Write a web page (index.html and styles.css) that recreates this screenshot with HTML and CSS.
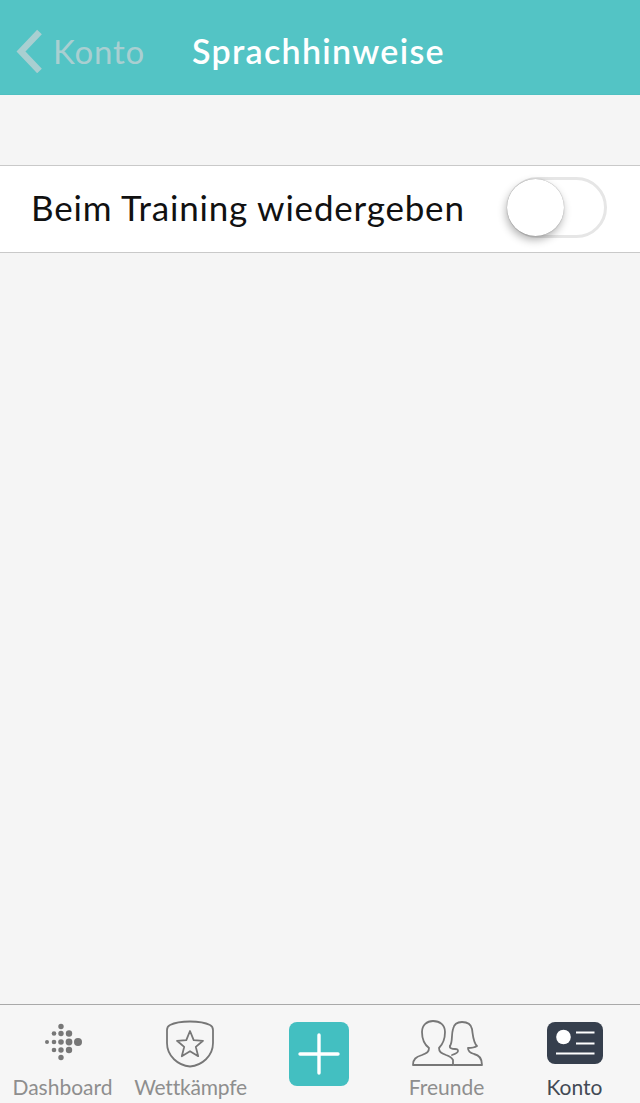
FILE: index.html
```html
<!DOCTYPE html>
<html lang="de">
  <head>
    <meta charset="utf-8">
    <title>Sprachhinweise</title>
    <link rel="stylesheet" href="styles.css">
  </head>
  <body>
    <div class="app">
      <header class="topbar">
        <div class="back">
          <svg class="chevron" width="28" height="44" viewBox="0 0 28 44">
            <path d="M24.500 3 L6 22.500 L24.500 42" fill="none" stroke="#a9cfd1" stroke-width="6.500"/>
          </svg>
          <span>Konto</span>
        </div>
        <h1>Sprachhinweise</h1>
      </header>
      <main class="content">
        <div class="row">
          <span>Beim Training wiedergeben</span>
          <div class="switch"><div class="knob"></div></div>
        </div>
      </main>
      <nav class="tabs">
        <div class="tab">
          <svg class="icon" width="44" height="44" viewBox="0 0 44 44" fill="#777">
            <circle cx="20" cy="5.500" r="2.700"/>
            <circle cx="13" cy="12.500" r="2.300"/><circle cx="20" cy="12.500" r="2.700"/><circle cx="28" cy="12.500" r="3.200"/>
            <circle cx="6" cy="21" r="2"/><circle cx="13" cy="21" r="2.300"/><circle cx="20" cy="21" r="2.800"/><circle cx="28" cy="21" r="3.400"/><circle cx="37" cy="21" r="4"/>
            <circle cx="13" cy="29" r="2.300"/><circle cx="20" cy="29" r="2.700"/><circle cx="28" cy="29" r="3.200"/>
            <circle cx="20" cy="36.500" r="2.700"/>
          </svg>
          <span>Dashboard</span>
        </div>
        <div class="tab">
          <svg class="icon icon-shield" width="50" height="50" viewBox="0 0 50 50" fill="none" stroke="#777" stroke-width="1.800" stroke-linejoin="round">
            <path d="M25 2.500 C33 2.500 40 3.500 45 6 C47.500 7.200 48 9 48 11 V24 C48 37 37 46.500 25 47.500 C13 46.500 2 37 2 24 V11 C2 9 2.500 7.200 5 6 C10 3.500 17 2.500 25 2.500 Z"/>
            <path d="M25 12 L28.700 21.200 L38 21.800 L30.800 27.900 L33.200 37.200 L25 32.200 L16.800 37.200 L19.200 27.900 L12 21.800 L21.300 21.200 Z"/>
          </svg>
          <span>Wettkämpfe</span>
        </div>
        <div class="tab">
          <div class="add">
            <svg width="42" height="42" viewBox="0 0 42 42" stroke="#fff" stroke-width="3.400" stroke-linecap="round">
              <path d="M21 2 V40 M2 21 H40"/>
            </svg>
          </div>
        </div>
        <div class="tab">
          <svg class="icon" width="72" height="50" viewBox="0 0 72 50" fill="none" stroke="#777" stroke-width="1.800" stroke-linejoin="round" stroke-linecap="round">
            <path d="M2 46 C2 40 5 38 11 36 C16 34 18 33 18 29 C14 26 11 21 11 13 C11 6 16 2 22 2 C29 2 34 6 34 13 C34 21 31 26 28 29 C28 33 30 34 35 36 C38 37 41 39 42 41 V46 Z"/>
            <path d="M39 27 C42 22 40 17 42 10 C43 5 47 3 51 3 C56 3 60 5 61 10 C62 16 62 23 66 27 C63 29 60 29 57 29 C57 32 59 34 63 35 C68 36 71 39 71 46 H43"/>
            <path d="M39 27 C38 29 41 30 44 30 C47 30 47 31 47 32 C47 34 44 35 41 36"/>
          </svg>
          <span>Freunde</span>
        </div>
        <div class="tab tab-on">
          <svg class="icon" width="56" height="42" viewBox="0 0 56 42">
            <rect width="56" height="42" rx="8" fill="#363f4d"/>
            <circle cx="16.500" cy="15" r="7.300" fill="#fff"/>
            <path d="M29 10.500 H47.500 M29 21.500 H47.500 M9 31.500 H47.500" stroke="#fff" stroke-width="2"/>
          </svg>
          <span>Konto</span>
        </div>
      </nav>
    </div>
  </body>
</html>
```

FILE: styles.css
```css
*{
  margin: 0;
  padding: 0;
  box-sizing: border-box;
}
body{
  background: #f5f5f5;
  font-family: "Lato", "Open Sans", sans-serif;
}
.app{
  display: flex;
  flex-direction: column;
  height: 1103px;
  overflow: hidden;
}
.topbar{
  display: flex;
  align-items: center;
  height: 95px;
  flex: none;
  padding: 7px 0 0 15px;
  background: #53c4c5;
  border-bottom: 1px solid #4fc0c1;
}
.back{
  display: flex;
  align-items: center;
  gap: 10px;
  width: 177px;
  font-size: 33px;
  letter-spacing: .8px;
  color: #a9cfd1;
}
.chevron{
  flex: none;
}
.topbar h1{
  font-size: 34px;
  font-weight: 600;
  letter-spacing: 1.300px;
  color: #fff;
}
.content{
  flex: 1;
  padding-top: 70px;
}
.row{
  display: flex;
  align-items: center;
  justify-content: space-between;
  height: 88px;
  padding: 0 33px 4px 31px;
  background: #fff;
  border-top: 1px solid #c9c9c9;
  border-bottom: 1px solid #c9c9c9;
  font-size: 35px;
  letter-spacing: .8px;
  color: #111;
}
.switch{
  position: relative;
  width: 100px;
  height: 61px;
  border: 3px solid #e6e6e6;
  border-radius: 31px;
  background: #fff;
}
.knob{
  position: absolute;
  left: -3px;
  top: -1px;
  width: 57px;
  height: 57px;
  border-radius: 50%;
  background: #fff;
  box-shadow: 0 0 1px rgba(0,0,0,.45), -1px 4px 9px rgba(0,0,0,.3);
}
.tabs{
  display: grid;
  grid-template-columns: repeat(5, 128px);
  justify-content: center;
  flex: none;
  height: 99px;
  padding-right: 3px;
  background: #f6f6f6;
  border-top: 1px solid #a9a9a9;
}
.tab{
  position: relative;
  display: flex;
  flex-direction: column;
  align-items: center;
  justify-content: flex-end;
  padding-bottom: 4px;
  font-size: 21px;
  color: #8e8e8e;
}
.tab:nth-child(2) span{
  letter-spacing: -.2px;
}
.icon{
  position: absolute;
  top: 14px;
}
.icon-shield{
  margin-left: -1px;
}
.tab:nth-child(1) .icon{
  top: 16px;
}
.tab-on{
  color: #434a55;
}
.tab-on .icon{
  top: 17px;
}
.add{
  display: flex;
  align-items: center;
  justify-content: center;
  width: 60px;
  height: 64px;
  margin-bottom: 13px;
  border-radius: 8px;
  background: #43bfc1;
}
```
